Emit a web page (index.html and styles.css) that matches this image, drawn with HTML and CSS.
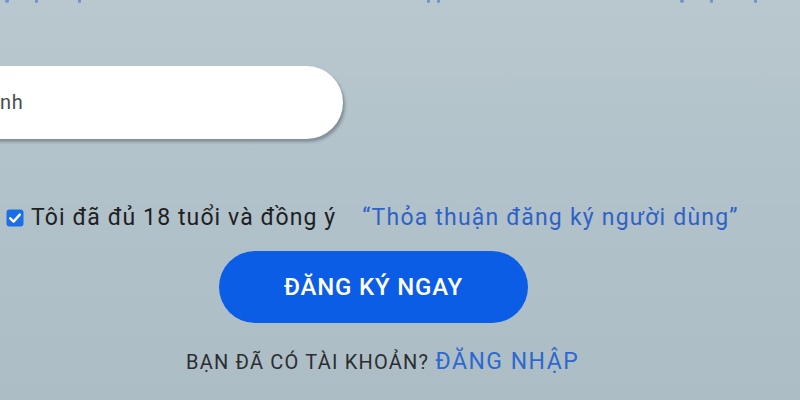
FILE: index.html
```html
<!DOCTYPE html>
<html lang="vi">
<head>
<meta charset="utf-8">
<link rel="stylesheet" href="styles.css">
</head>
<body>
<div class="page">
  <div class="top-strip">
    <span class="dot d1"></span><span class="dot d2"></span><span class="dot d3"></span>
    <span class="dot d4"></span><span class="dot d5"></span>
    <span class="dot d6"></span><span class="dot d7"></span><span class="dot d8"></span>
  </div>
  <form class="form">
    <div class="field">
      <span class="input-text">nh</span>
    </div>
    <label class="agree">
      <span class="check">
        <svg viewBox="0 0 18 18" width="18" height="18"><rect x="0.5" y="0.5" width="17" height="17" rx="3" fill="#1a6fe6"/><path d="M4.2 9.3 L7.6 12.6 L13.8 5.6" fill="none" stroke="#fff" stroke-width="2.4" stroke-linecap="round" stroke-linejoin="round"/></svg>
      </span>
      <span class="agree-text">Tôi đã đủ 18 tuổi và đồng ý</span>
      <a class="agree-link">“Thỏa thuận đăng ký người dùng”</a>
    </label>
    <button class="submit" type="button">ĐĂNG KÝ NGAY</button>
    <p class="login">BẠN ĐÃ CÓ TÀI KHOẢN? <a class="login-link">ĐĂNG NHẬP</a></p>
  </form>
</div>
</body>
</html>
```
FILE: styles.css
```css
html, body {
  margin: 0;
  padding: 0;
}
body {
  width: 800px;
  height: 400px;
  overflow: hidden;
  font-family: Roboto, "Liberation Sans", Arial, sans-serif;
  background: linear-gradient(180deg, #b9c8ce 0%, #b2c2ca 45%, #adbdc6 100%);
}
.page {
  position: relative;
  width: 800px;
  height: 400px;
  overflow: hidden;
}
.top-strip {
  position: relative;
  height: 8px;
}
.dot {
  position: absolute;
  top: 0;
  width: 3px;
  height: 3px;
  border-radius: 0 0 2px 2px;
  background: #5a7ccf;
  opacity: 0.7;
}
.d1 { left: 5px; width: 4px; }
.d2 { left: 35px; }
.d3 { left: 78px; }
.d4 { left: 427px; }
.d5 { left: 437px; }
.d6 { left: 680px; width: 4px; }
.d7 { left: 710px; }
.d8 { left: 754px; }
.form {
  display: flex;
  flex-direction: column;
  align-items: flex-start;
  margin: 0;
}
.field {
  position: relative;
  margin-top: 58px;
  margin-left: -80px;
  width: 423px;
  height: 73px;
  border-radius: 37px;
  background: #fff;
  box-shadow: 2px 3px 3px rgba(70, 80, 90, 0.45);
  overflow: hidden;
}
.input-text {
  position: absolute;
  left: 80px;
  top: 0;
  line-height: 73px;
  font-size: 20px;
  letter-spacing: 0.6px;
  color: #4a4d50;
}
.agree {
  display: flex;
  align-items: center;
  margin-top: 64px;
  margin-left: 6px;
  height: 28px;
  font-size: 23px;
  letter-spacing: 1.1px;
}
.check {
  display: flex;
  width: 18px;
  height: 18px;
  margin-right: 7px;
  margin-top: 1px;
}
.agree-text {
  color: #1e2022;
}
.agree-link {
  margin-left: 26px;
  color: #2f62c7;
  letter-spacing: 1.2px;
}
.submit {
  margin-top: 20px;
  margin-left: 219px;
  width: 309px;
  height: 72px;
  border: none;
  border-radius: 36px;
  background: #0a5de4;
  color: #fff;
  font-family: Roboto, "Liberation Sans", Arial, sans-serif;
  font-size: 24px;
  font-weight: 500;
  letter-spacing: 0.8px;
  padding: 0;
}
.login {
  margin: 24px 0 0 186px;
  font-size: 20px;
  letter-spacing: 1.2px;
  color: #2b2e31;
  line-height: 30px;
}
.login-link {
  font-size: 23px;
  letter-spacing: 1.5px;
  color: #2d68d0;
}
```
